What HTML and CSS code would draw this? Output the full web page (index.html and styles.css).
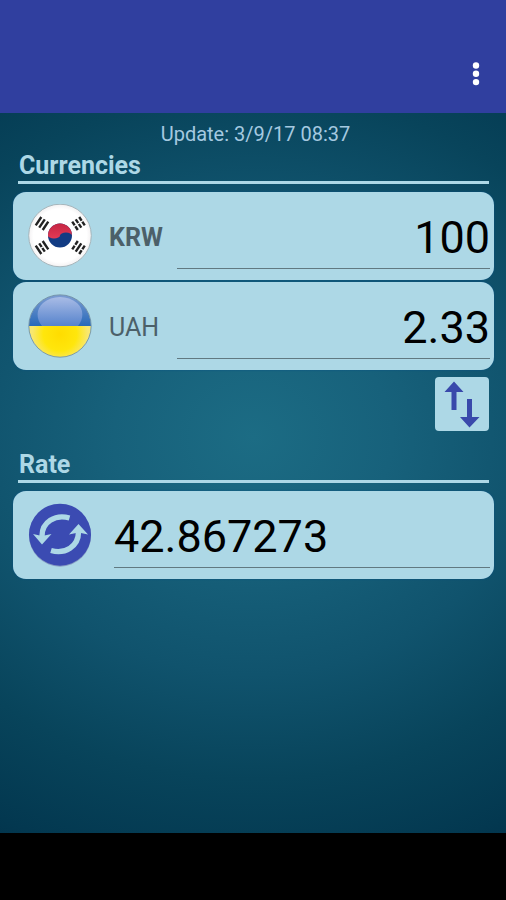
FILE: index.html
```html
<!DOCTYPE html>
<html lang="en">
<head>
<meta charset="utf-8">
<meta name="viewport" content="width=device-width, initial-scale=1">
<title>Currency converter</title>
<link rel="stylesheet" href="styles.css">
</head>
<body>
<header class="app-bar">
  <button class="menu-button" type="button" aria-label="More options">
    <svg class="menu-icon" viewBox="0 0 10 26" aria-hidden="true">
      <circle cx="5" cy="4.500" r="3.2"/><circle cx="5" cy="12.800" r="3.2"/><circle cx="5" cy="21.100" r="3.2"/>
    </svg>
  </button>
</header>
<main class="content">
  <p class="update">Update: 3/9/17 08:37</p>
  <section class="section">
    <h2 class="section-title">Currencies</h2>
    <div class="cards">
      <div class="card">
        <svg class="badge" viewBox="0 0 64 64" aria-hidden="true">
          <defs>
            <g id="bars" stroke="#222" stroke-width="2.4"><path d="M-5-4.200H5M-5 0H5M-5 4.200H5"/></g>
            <radialGradient id="white" cx=".5" cy=".5" r=".5"><stop offset=".85" stop-color="#fff"/><stop offset="1" stop-color="#f3f1f2"/></radialGradient>
            <linearGradient id="red" x2="0" y2="1"><stop stop-color="#c52543"/><stop offset="1" stop-color="#e23a55"/></linearGradient>
          </defs>
          <circle cx="32" cy="31.500" r="31.3" fill="url(#white)" stroke="#a5b5bb"/>
          <circle cx="32" cy="31.500" r="12" fill="#123b83"/>
          <path d="M20 31.500a12 12 0 0 1 24 0a6 3 0 0 0-12 0a6 3 0 0 1-12 0z" fill="url(#red)"/>
          <use href="#bars" transform="translate(14 19.500) rotate(-56)"/>
          <g transform="translate(50.500 19.500) rotate(56)"><use href="#bars"/><path d="M0-6V6" stroke="#fff" stroke-width="1.2"/></g>
          <g transform="translate(14 43.500) rotate(56)"><use href="#bars"/><path d="M0-2V2" stroke="#fff" stroke-width="1.2"/></g>
          <g transform="translate(50.500 43.500) rotate(-56)"><use href="#bars"/><path d="M0-6V-2M0 2V6" stroke="#fff" stroke-width="1.2"/></g>
        </svg>
        <label class="code code-active" for="krw">KRW</label>
        <input class="amount" id="krw" type="text" inputmode="decimal" value="100">
      </div>
      <div class="card">
        <svg class="badge" viewBox="0 0 64 64" aria-hidden="true">
          <defs>
            <linearGradient id="gloss" x2="0" y2="1"><stop stop-color="#a9bce6"/><stop offset="1" stop-color="#5683cc"/></linearGradient>
            <radialGradient id="yellow" gradientUnits="userSpaceOnUse" cx="32" cy="40" r="28"><stop stop-color="#ffdc00"/><stop offset=".6" stop-color="#ffe60c"/><stop offset="1" stop-color="#f8e770"/></radialGradient>
            <linearGradient id="blue" x2="0" y2="1"><stop stop-color="#7d9dd2"/><stop offset="1" stop-color="#2769b9"/></linearGradient>
          </defs>
          <path d="M1 32a31 31 0 0 1 62 0z" fill="url(#blue)"/>
          <path d="M1 32a31 31 0 0 0 62 0z" fill="url(#yellow)"/>
          <path d="M14 32C8 25 8 15 15 9C24 1 40 1 49 9C56 15 56 25 50 32z" fill="url(#gloss)"/>
          <circle cx="32" cy="32" r="31.2" fill="none" stroke="#69879b" stroke-opacity=".75"/>
        </svg>
        <label class="code" for="uah">UAH</label>
        <input class="amount" id="uah" type="text" inputmode="decimal" value="2.33">
      </div>
    </div>
    <button class="swap" type="button" aria-label="Swap currencies">
      <svg class="swap-icon" viewBox="0 0 54 54" aria-hidden="true">
        <path d="M19 4.500L28.500 15H21.500V33H16.500V15H9.500zM34.500 50.500L25 40H32V22H37V40H44.500z"/>
      </svg>
    </button>
  </section>
  <section class="section">
    <h2 class="section-title">Rate</h2>
    <div class="card">
      <button class="refresh" type="button" aria-label="Refresh rate">
        <svg class="badge" viewBox="0 0 64 64" aria-hidden="true">
          <circle cx="32" cy="32.700" r="31" fill="#879dc3"/>
          <circle cx="32" cy="31.700" r="31" fill="#3b4bb2"/>
          <g fill="none" stroke="#add8e6" stroke-width="5.400">
            <path d="M41.500 15C27 11 14 19 14 33"/>
            <path d="M23 47.500C37 51.500 50.500 43.500 50.500 29"/>
          </g>
          <path d="M5 31L14 33L23.500 31L14 41.500zM41 31.500L50.500 21L60 31.500L50.500 29.500z" fill="#add8e6"/>
        </svg>
      </button>
      <input class="amount rate" type="text" inputmode="decimal" aria-label="Rate" value="42.867273">
    </div>
  </section>
</main>
<footer class="nav-bar"></footer>
</body>
</html>
```
FILE: styles.css
```css
* {
  box-sizing: border-box;
}

body {
  margin: 0;
  min-height: 100vh;
  display: flex;
  flex-direction: column;
  font-family: Roboto, "Liberation Sans", sans-serif;
  background: #000;
}

button {
  padding: 0;
  border: 0;
  cursor: pointer;
}

svg {
  display: block;
}

.app-bar {
  height: 113px;
  padding: 34px 6px 0;
  display: flex;
  justify-content: flex-end;
  background: #303f9f;
}

.menu-button {
  width: 48px;
  height: 79px;
  display: grid;
  place-items: center;
  background: none;
}

.menu-icon {
  width: 10px;
  height: 26px;
  fill: #fff;
}

.content {
  flex: 1;
  padding: 8px 12px 0 13px;
  background: radial-gradient(ellipse 110% 66% at 50% 45%, #1c6c84 0%, #17617b 25%, #10536d 50%, #08445b 72%, #033850 92%, #02324a 100%);
}

.update {
  margin: 0;
  padding-left: 4px;
  font-size: 20px;
  line-height: 27px;
  text-align: center;
  color: #a5c9e0;
}

.section {
  display: flex;
  flex-direction: column;
}

.section-title {
  margin: 0 5px 8px;
  padding: 3px 1px 0;
  border-bottom: 3px solid #add8e6;
  font-size: 25px;
  line-height: 30px;
  font-weight: 700;
  color: #add8e6;
}

.cards {
  display: grid;
  grid-template-columns: minmax(0, 1fr);
  gap: 2px;
}

.card {
  height: 88px;
  padding: 0 4px 0 15px;
  display: flex;
  align-items: center;
  border-radius: 13px;
  background: #add8e6;
  box-shadow: 0 0 2px #0a5286;
}

.badge {
  width: 64px;
  height: 64px;
  flex: none;
}

.code {
  width: 68px;
  flex: none;
  margin-left: 17px;
  padding-top: 2px;
  font-size: 25px;
  color: #4c6069;
}

.code-active {
  font-weight: 700;
}

.amount {
  flex: 1;
  min-width: 0;
  height: 66px;
  padding: 3px 0 0;
  border: 0;
  border-bottom: 1px solid #617981;
  outline: 0;
  background: none;
  font-family: inherit;
  font-size: 45px;
  text-align: right;
  color: #000;
}

.rate {
  margin-left: 22px;
  text-align: left;
}

.swap {
  width: 54px;
  height: 54px;
  margin: 7px 5px 16px;
  align-self: flex-end;
  border-radius: 4px;
  background: #add8e6;
}

.swap-icon {
  width: 54px;
  height: 54px;
  fill: #3949ab;
}

.refresh {
  border-radius: 50%;
  background: none;
}

.nav-bar {
  height: 67px;
  background: #000;
}
```
